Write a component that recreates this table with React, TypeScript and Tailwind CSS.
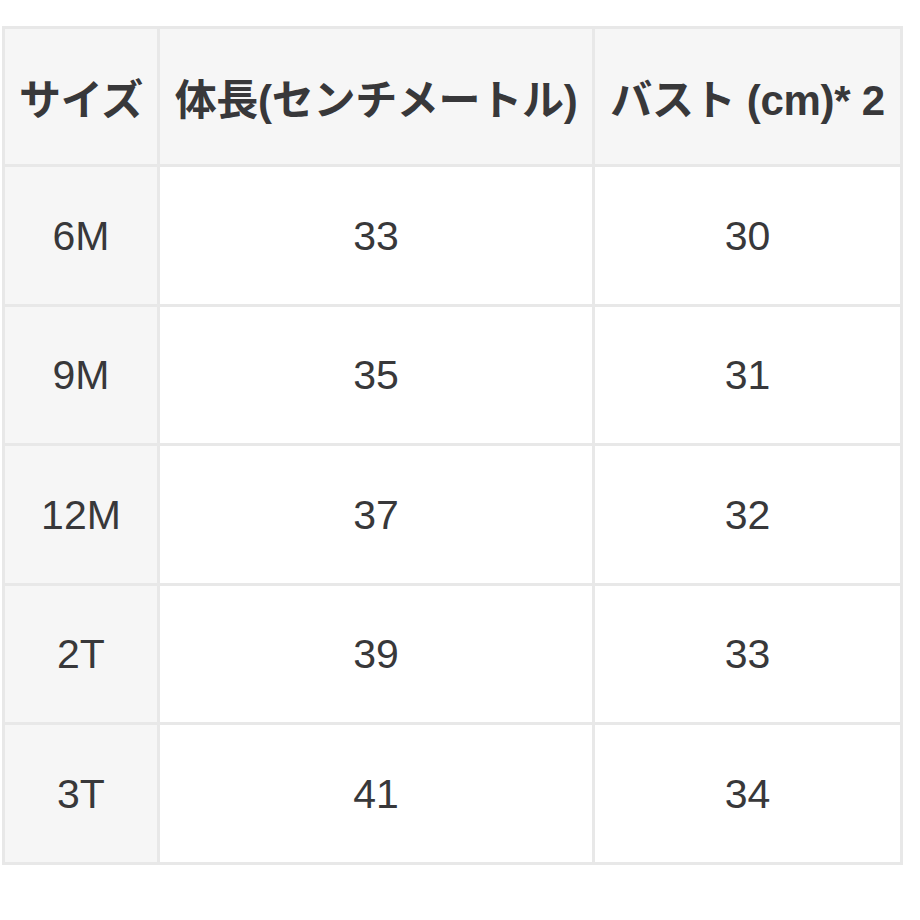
const header = ['サイズ', '体長(センチメートル)', 'バスト (cm)* 2'];

const rows = [
  ['6M', '33', '30'],
  ['9M', '35', '31'],
  ['12M', '37', '32'],
  ['2T', '39', '33'],
  ['3T', '41', '34'],
];

export default function App() {
  return (
    <div
      className="h-[920px] w-[920px] bg-white pl-[2px] pt-[26px] text-[#38383a]"
      style={{ fontFamily: '"Liberation Sans", "Noto Sans CJK JP", sans-serif' }}
    >
      <div className="grid w-[901px] grid-cols-[152px_432px_305px] gap-[3px] bg-[#e8e8e8] p-[3px]">
        {header.map((h) => (
          <div
            key={h}
            className="flex h-[135px] items-center justify-center whitespace-nowrap bg-[#f6f6f6] pt-[8px] text-[42px] font-bold tracking-[-0.3px]"
          >
            {h}
          </div>
        ))}
        {rows.map((r) =>
          r.map((c, i) => (
            <div
              key={r[0] + i}
              className={`flex h-[136.5px] items-center justify-center pt-[2px] text-[41px] ${
                i === 0 ? 'bg-[#f6f6f6]' : 'bg-white'
              }`}
            >
              {c}
            </div>
          )),
        )}
      </div>
    </div>
  );
}
